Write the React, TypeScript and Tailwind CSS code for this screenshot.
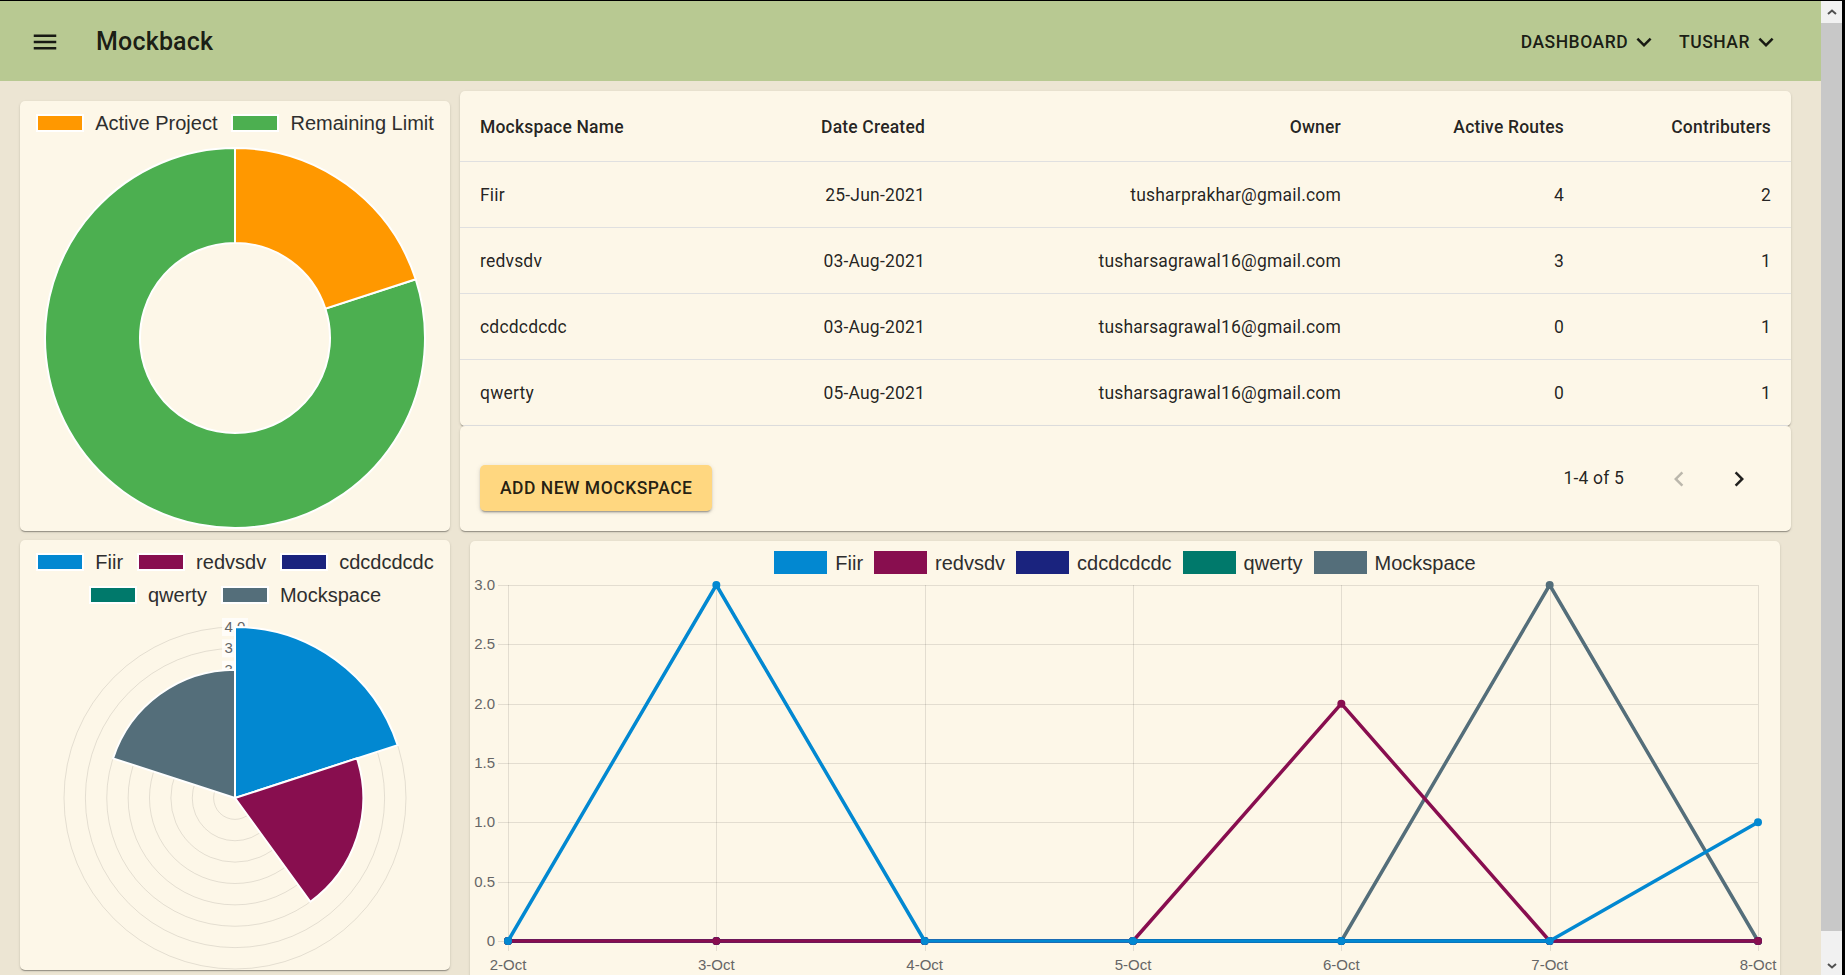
import React from "react";

const CARD =
  "bg-[#fdf7e8] rounded-[5px] shadow-[0_2px_1px_-1px_rgba(0,0,0,0.2),0_1px_1px_0_rgba(0,0,0,0.14),0_1px_3px_0_rgba(0,0,0,0.12)]";

const rows = [
  { name: "Fiir", date: "25-Jun-2021", owner: "tusharprakhar@gmail.com", routes: 4, contrib: 2 },
  { name: "redvsdv", date: "03-Aug-2021", owner: "tusharsagrawal16@gmail.com", routes: 3, contrib: 1 },
  { name: "cdcdcdcdc", date: "03-Aug-2021", owner: "tusharsagrawal16@gmail.com", routes: 0, contrib: 1 },
  { name: "qwerty", date: "05-Aug-2021", owner: "tusharsagrawal16@gmail.com", routes: 0, contrib: 1 },
];

const series = [
  { name: "Fiir", color: "#0288d1", bg: "bg-[#0288d1]", data: [0, 3, 0, 0, 0, 0, 1], polar: 4 },
  { name: "redvsdv", color: "#880e4f", bg: "bg-[#880e4f]", data: [0, 0, 0, 0, 2, 0, 0], polar: 3 },
  { name: "cdcdcdcdc", color: "#1a237e", bg: "bg-[#1a237e]", data: [0, 0, 0, 0, 0, 0, 0], polar: 0 },
  { name: "qwerty", color: "#00796b", bg: "bg-[#00796b]", data: [0, 0, 0, 0, 0, 0, 0], polar: 0 },
  { name: "Mockspace", color: "#546e7a", bg: "bg-[#546e7a]", data: [0, 0, 0, 0, 0, 3, 0], polar: 3 },
];

const days = ["2-Oct", "3-Oct", "4-Oct", "5-Oct", "6-Oct", "7-Oct", "8-Oct"];

function ExpandMore() {
  return (
    <svg width="30" height="30" viewBox="0 0 24 24" className="ml-[1px]">
      <path d="M16.59 8.59L12 13.17 7.41 8.59 6 10l6 6 6-6z" fill="currentColor" />
    </svg>
  );
}

function NavButton({ label }: { label: string }) {
  return (
    <div className="flex items-center">
      <span className="text-[17.5px] font-medium uppercase tracking-[0.02857em] leading-[1.75]">{label}</span>
      <ExpandMore />
    </div>
  );
}

function LegendItem({ bg, label, big }: { bg: string; label: string; big?: boolean }) {
  return (
    <div className={big ? "flex items-center gap-[8px]" : "flex items-center gap-[11px]"}>
      <div className={big ? `w-[53px] h-[23px] ${bg}` : `w-[48px] h-[18px] border-2 border-white ${bg}`} />
      <span className="text-[20px] leading-none text-[#2e2e2e]">{label}</span>
    </div>
  );
}

// angle in degrees, clockwise from 12 o'clock
const pt = (cx: number, cy: number, r: number, a: number) => {
  const t = (a * Math.PI) / 180;
  return [cx + r * Math.sin(t), cy - r * Math.cos(t)];
};

function DonutChart() {
  const cx = 215, cy = 203, R = 190, r = 95;
  const arc = (a1: number, a2: number) => {
    const large = a2 - a1 > 180 ? 1 : 0;
    const [x1, y1] = pt(cx, cy, R, a1);
    const [x2, y2] = pt(cx, cy, R, a2);
    const [x3, y3] = pt(cx, cy, r, a2);
    const [x4, y4] = pt(cx, cy, r, a1);
    return `M${x1} ${y1}A${R} ${R} 0 ${large} 1 ${x2} ${y2}L${x3} ${y3}A${r} ${r} 0 ${large} 0 ${x4} ${y4}Z`;
  };
  return (
    <svg width="430" height="396">
      <path d={arc(72, 360)} fill="#4caf50" stroke="#fff" strokeWidth="2" />
      <path d={arc(0, 72)} fill="#ff9800" stroke="#fff" strokeWidth="2" />
    </svg>
  );
}

function PolarChart() {
  const cx = 215, cy = 191, unit = 42.75;
  const ticks = [0.5, 1, 1.5, 2, 2.5, 3, 3.5, 4];
  const sector = (a1: number, a2: number, rad: number) => {
    const [x1, y1] = pt(cx, cy, rad, a1);
    const [x2, y2] = pt(cx, cy, rad, a2);
    return `M${cx} ${cy}L${x1} ${y1}A${rad} ${rad} 0 0 1 ${x2} ${y2}Z`;
  };
  return (
    <svg width="430" height="363" className="font-['Liberation_Sans',Arial,sans-serif]">
      {ticks.map((t) => (
        <circle key={t} cx={cx} cy={cy} r={t * unit} fill="none" stroke="rgba(0,0,0,0.1)" strokeWidth="1" />
      ))}
      {ticks.map((t) => (
        <g key={"l" + t}>
          <rect x={cx - 13} y={cy - t * unit - 9} width="26" height="18" fill="rgba(255,255,255,0.75)" />
          <text x={cx} y={cy - t * unit + 5} textAnchor="middle" fontSize="15" fill="#666">
            {t.toFixed(1)}
          </text>
        </g>
      ))}
      {series.map((s, i) =>
        s.polar > 0 ? (
          <path key={s.name} d={sector(i * 72, i * 72 + 72, s.polar * unit)} fill={s.color} stroke="#fff" strokeWidth="2" />
        ) : null
      )}
    </svg>
  );
}

function LineChart() {
  const X = (i: number) => 38 + i * 208.333;
  const Y = (v: number) => 366 - v * 118.667;
  const yTicks = [0, 0.5, 1, 1.5, 2, 2.5, 3];
  return (
    <svg width="1310" height="420" className="font-['Liberation_Sans',Arial,sans-serif]">
      {yTicks.map((v) => (
        <g key={v}>
          <line x1="28" x2={X(6)} y1={Math.round(Y(v)) + 0.5} y2={Math.round(Y(v)) + 0.5} stroke="rgba(0,0,0,0.1)" />
          <text x="25" y={Y(v) + 5} textAnchor="end" fontSize="15" fill="#666">
            {v === 0 ? "0" : v.toFixed(1)}
          </text>
        </g>
      ))}
      {days.map((d, i) => (
        <g key={d}>
          <line x1={Math.round(X(i)) + 0.5} x2={Math.round(X(i)) + 0.5} y1="10" y2="376" stroke="rgba(0,0,0,0.1)" />
          <text x={X(i)} y="395" textAnchor="middle" fontSize="15" fill="#666">
            {d}
          </text>
        </g>
      ))}
      {[...series].reverse().map((s) => (
        <g key={s.name}>
          <polyline
            points={s.data.map((v, i) => `${X(i)},${Y(v)}`).join(" ")}
            fill="none"
            stroke={s.color}
            strokeWidth="3.5"
            strokeLinejoin="round"
          />
          {s.data.map((v, i) => (
            <circle key={i} cx={X(i)} cy={Y(v)} r="4" fill={s.color} />
          ))}
        </g>
      ))}
    </svg>
  );
}

function ChevronRight({ disabled }: { disabled?: boolean }) {
  return (
    <svg width="30" height="30" viewBox="0 0 24 24">
      <path
        d={disabled ? "M15.41 16.59L10.83 12l4.58-4.59L14 6l-6 6 6 6 1.41-1.41z" : "M8.59 16.59L13.17 12 8.59 7.41 10 6l6 6-6 6-1.41-1.41z"}
        fill={disabled ? "rgba(0,0,0,0.26)" : "rgba(0,0,0,0.87)"}
      />
    </svg>
  );
}

export default function App() {
  return (
    <div className="flex h-[975px] w-[1845px] overflow-hidden border-t border-black font-['Roboto',sans-serif] text-[rgba(0,0,0,0.87)]">
      <div className="w-[1821px] flex-none flex flex-col bg-[#ece5d3] overflow-hidden">
        {/* App bar */}
        <header className="h-[80px] flex-none bg-[#b8c992] flex items-center justify-between pl-[30px] pr-[40px] pt-[2px]">
          <div className="flex items-center">
            <svg width="30" height="30" viewBox="0 0 24 24">
              <path d="M3 18h18v-2H3v2zm0-5h18v-2H3v2zm0-7v2h18V6H3z" fill="currentColor" />
            </svg>
            <h6 className="ml-[36px] text-[25px] font-medium leading-[1.6] tracking-[0.0075em]">Mockback</h6>
          </div>
          <div className="flex items-center gap-[20px]">
            <NavButton label="Dashboard" />
            <NavButton label="Tushar" />
          </div>
        </header>

        {/* Top row */}
        <div className="flex items-start pl-[20px]">
          <div className={`${CARD} mt-[20px] w-[430px] h-[430px] flex flex-col font-['Liberation_Sans',Arial,sans-serif]`}>
            <div className="pt-[10px] flex justify-center gap-[14px] h-[34px]">
              <LegendItem bg="bg-[#ff9800]" label="Active Project" />
              <LegendItem bg="bg-[#4caf50]" label="Remaining Limit" />
            </div>
            <DonutChart />
          </div>

          <div className="ml-[10px] mt-[10px] w-[1331px] flex flex-col">
            <div className={`${CARD} overflow-hidden`}>
              <table className="w-full table-fixed text-[17.5px] tracking-[0.01071em]">
                <colgroup>
                  <col className="w-[320px]" />
                  <col className="w-[165px]" />
                  <col className="w-[416px]" />
                  <col className="w-[223px]" />
                  <col className="w-[207px]" />
                </colgroup>
                <thead>
                  <tr className="font-medium leading-[30px]">
                    <th className="pt-[21px] pb-[19px] px-[20px] text-left font-medium border-b border-[#e0e0e0]">Mockspace Name</th>
                    <th className="pt-[21px] pb-[19px] px-[20px] text-right font-medium border-b border-[#e0e0e0] whitespace-nowrap">Date Created</th>
                    <th className="pt-[21px] pb-[19px] px-[20px] text-right font-medium border-b border-[#e0e0e0]">Owner</th>
                    <th className="pt-[21px] pb-[19px] px-[20px] text-right font-medium border-b border-[#e0e0e0]">Active Routes</th>
                    <th className="pt-[21px] pb-[19px] px-[20px] text-right font-medium border-b border-[#e0e0e0]">Contributers</th>
                  </tr>
                </thead>
                <tbody className="leading-[25px]">
                  {rows.map((r) => (
                    <tr key={r.name}>
                      <td className="pt-[21px] pb-[19px] px-[20px] text-left border-b border-[#e0e0e0]">{r.name}</td>
                      <td className="pt-[21px] pb-[19px] px-[20px] text-right border-b border-[#e0e0e0] whitespace-nowrap">{r.date}</td>
                      <td className="pt-[21px] pb-[19px] px-[20px] text-right border-b border-[#e0e0e0]">{r.owner}</td>
                      <td className="pt-[21px] pb-[19px] px-[20px] text-right border-b border-[#e0e0e0]">{r.routes}</td>
                      <td className="pt-[21px] pb-[19px] px-[20px] text-right border-b border-[#e0e0e0]">{r.contrib}</td>
                    </tr>
                  ))}
                </tbody>
              </table>
            </div>

            <div className={`${CARD} h-[105px] flex justify-between items-center pl-[20px] pr-[22px]`}>
              <button className="self-start mt-[39px] h-[46px] px-[20px] rounded-[5px] bg-[#ffd780] text-[17.5px] font-medium uppercase tracking-[0.02857em] shadow-[0_3px_1px_-2px_rgba(0,0,0,0.2),0_2px_2px_0_rgba(0,0,0,0.14),0_1px_5px_0_rgba(0,0,0,0.12)]">
                Add new Mockspace
              </button>
              <div className="flex items-center text-[17.5px] tracking-[0.01071em]">
                <span>1-4 of 5</span>
                <div className="ml-[25px] flex">
                  <div className="w-[60px] h-[60px] flex items-center justify-center">
                    <ChevronRight disabled />
                  </div>
                  <div className="w-[60px] h-[60px] flex items-center justify-center">
                    <ChevronRight />
                  </div>
                </div>
              </div>
            </div>
          </div>
        </div>

        {/* Bottom row */}
        <div className="flex items-start pl-[20px]">
          <div className={`${CARD} mt-[9px] w-[430px] h-[430px] flex-none flex flex-col font-['Liberation_Sans',Arial,sans-serif]`}>
            <div className="pt-[10px] flex flex-col items-center gap-[9px]">
              <div className="h-[24px] flex items-center gap-[14px]">
                {series.slice(0, 3).map((s) => (
                  <LegendItem key={s.name} bg={s.bg} label={s.name} />
                ))}
              </div>
              <div className="h-[24px] flex items-center gap-[14px]">
                {series.slice(3).map((s) => (
                  <LegendItem key={s.name} bg={s.bg} label={s.name} />
                ))}
              </div>
            </div>
            <PolarChart />
          </div>

          <div className={`${CARD} ml-[20px] mt-[10px] w-[1310px] h-[450px] flex-none flex flex-col overflow-hidden font-['Liberation_Sans',Arial,sans-serif]`}>
            <div className="pt-[10px] h-[34px] flex justify-center gap-[11px]">
              {series.map((s) => (
                <LegendItem key={s.name} bg={s.bg} label={s.name} big />
              ))}
            </div>
            <LineChart />
          </div>
        </div>
      </div>

      {/* Scrollbar */}
      <div className="w-[21px] flex-none flex flex-col">
        <div className="h-[22px] bg-[#f1f1f1] flex items-center justify-center">
          <svg width="10" height="6" viewBox="0 0 10 6">
            <path d="M1 5L5 1.5 9 5" fill="none" stroke="#505050" strokeWidth="2" />
          </svg>
        </div>
        <div className="flex-1 bg-[#c8c8c8]" />
        <div className="h-[44px] bg-[#f1f1f1] flex items-end justify-center pb-[6px]">
          <svg width="10" height="6" viewBox="0 0 10 6">
            <path d="M1 1L5 4.5 9 1" fill="none" stroke="#505050" strokeWidth="2" />
          </svg>
        </div>
      </div>
      <div className="w-[3px] flex-none bg-black" />
    </div>
  );
}
